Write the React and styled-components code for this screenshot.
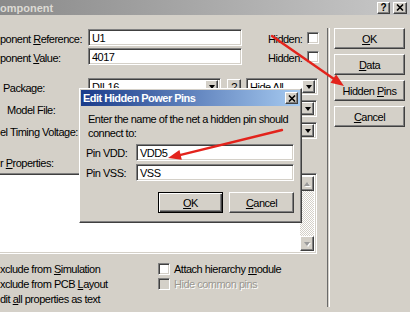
import React from 'react';
import styled, { createGlobalStyle, css } from 'styled-components';

const GlobalStyle = createGlobalStyle`
  html, body {
    margin: 0;
    padding: 0;
  }
  body {
    width: 410px;
    height: 312px;
    overflow: hidden;
    background: #d4d0c8;
    font-family: "Liberation Sans", Arial, sans-serif;
    font-size: 11px;
    letter-spacing: -0.5px;
    color: #000;
  }
`;

const raised = css`
  border: 1px solid;
  border-color: #fff #404040 #404040 #fff;
  box-shadow: inset -1px -1px 0 #808080, inset 1px 1px 0 #d4d0c8;
  background: #d4d0c8;
`;

const sunken = css`
  border: 1px solid;
  border-color: #808080 #fff #fff #808080;
  box-shadow: inset 1px 1px 0 #404040, inset -1px -1px 0 #d4d0c8;
`;

const Window = styled.div`
  position: relative;
  width: 410px;
  height: 312px;
  display: flex;
  flex-direction: column;
  overflow: hidden;
`;

const TitleBar = styled.div`
  height: 15px;
  flex: none;
  display: flex;
  align-items: center;
  gap: 3px;
  padding-right: 3px;
  background: linear-gradient(to right, #8a8a8a, #c8c8c8);
`;

const TitleText = styled.span`
  flex: 1;
  font-weight: bold;
  color: #dcdad4;
  letter-spacing: 0;
`;

const CaptionButton = styled.div`
  box-sizing: border-box;
  width: ${p => p.$w || 13}px;
  height: 12px;
  ${raised};
  display: flex;
  align-items: center;
  justify-content: center;
  font-weight: bold;
  font-size: 10px;
  letter-spacing: 0;
`;

const Body = styled.div`
  flex: 1;
  display: flex;
`;

const Main = styled.div`
  width: 327px;
  flex: none;
  display: flex;
  flex-direction: column;
  padding-top: 14px;
`;

const FormRow = styled.div`
  display: flex;
  align-items: center;
  height: 17px;
  margin-top: ${p => p.$gap || 0}px;
`;

const Label = styled.span`
  box-sizing: border-box;
  width: 88px;
  flex: none;
  padding-left: ${p => p.$indent || 0}px;
  padding-top: 2px;
  white-space: nowrap;
`;

const Key = styled.span`
  text-decoration: underline;
`;

const TextField = styled.div`
  box-sizing: border-box;
  width: ${p => p.$w}px;
  height: 17px;
  flex: none;
  margin-left: ${p => p.$ml || 0}px;
  ${sunken};
  background: #fff;
  display: flex;
  align-items: center;
  padding: 0 2px 0 3px;
  white-space: nowrap;
`;

const FieldText = styled.span`
  flex: 1;
`;

const DropButton = styled.div`
  box-sizing: border-box;
  width: 13px;
  height: 13px;
  flex: none;
  ${raised};
  display: flex;
  align-items: center;
  justify-content: center;
  &::after {
    content: '';
    border-left: 3.5px solid transparent;
    border-right: 3.5px solid transparent;
    border-top: 4px solid #000;
    margin-top: 1px;
  }
`;

const SmallButton = styled.div`
  box-sizing: border-box;
  width: 14px;
  height: 16px;
  margin-left: ${p => p.$ml || 0}px;
  flex: none;
  ${raised};
  display: flex;
  align-items: center;
  justify-content: center;
`;

const HiddenLabel = styled.span`
  margin-left: 26px;
  width: 39px;
  padding-top: 2px;
`;

const CheckBox = styled.div`
  box-sizing: border-box;
  width: 12px;
  height: 12px;
  flex: none;
  ${sunken};
  background: ${p => (p.$disabled ? '#d4d0c8' : '#fff')};
`;

const ListBox = styled.div`
  box-sizing: border-box;
  margin-left: -2px;
  margin-top: 3px;
  width: 319px;
  height: 81px;
  ${sunken};
  background: #fff;
  display: flex;
  justify-content: flex-end;
  padding: 2px 2px 2px 0;
`;

const ScrollBar = styled.div`
  width: 14px;
  display: flex;
  flex-direction: column;
  justify-content: space-between;
  background-color: #eeede9;
  background-image: repeating-conic-gradient(#fff 0 25%, #d4d0c8 0 50%);
  background-size: 2px 2px;
`;

const ScrollArrow = styled.div`
  box-sizing: border-box;
  height: 15px;
  ${raised};
  display: flex;
  align-items: center;
  justify-content: center;
  &::after {
    content: '';
    border-left: 3.5px solid transparent;
    border-right: 3.5px solid transparent;
    ${p => (p.$up ? 'border-bottom' : 'border-top')}: 4px solid #9a9a9a;
    filter: drop-shadow(1px 1px 0 #fff);
  }
`;

const CheckGrid = styled.div`
  display: grid;
  grid-template-columns: 158px 1fr;
  grid-auto-rows: 15px;
  margin-top: 7px;
`;

const CheckItem = styled.div`
  display: flex;
  align-items: center;
  gap: 4px;
  white-space: nowrap;
  color: ${p => (p.$disabled ? '#9a9891' : '#000')};
  text-shadow: ${p => (p.$disabled ? '1px 1px 0 #fff' : 'none')};
`;

const Separator = styled.div`
  width: 1px;
  margin-top: 13px;
  height: 279px;
  border-left: 1px solid #6a6a6a;
  border-right: 1px solid #fff;
`;

const ButtonColumn = styled.div`
  display: flex;
  flex-direction: column;
  gap: 5px;
  padding: 13px 0 0 4px;
`;

const PushButton = styled.div`
  box-sizing: border-box;
  width: ${p => p.$w || 71}px;
  height: 21px;
  display: flex;
  align-items: center;
  justify-content: center;
  ${raised};
  ${p =>
    p.$default &&
    css`
      border: 1px solid #000;
      box-shadow: inset 1px 1px 0 #fff, inset -1px -1px 0 #404040, inset -2px -2px 0 #808080;
    `}
`;

const Dialog = styled.div`
  position: absolute;
  left: 79px;
  top: 88px;
  width: 223px;
  height: 135px;
  box-sizing: border-box;
  ${raised};
  padding: 1px;
  display: flex;
  flex-direction: column;
`;

const DialogTitle = styled.div`
  height: 16px;
  display: flex;
  align-items: center;
  padding: 0 2px;
  background: linear-gradient(to right, #1a3b8a, #a6caf0);
  color: #fff;
  font-weight: bold;
`;

const DialogTitleText = styled.span`
  flex: 1;
`;

const DialogBody = styled.div`
  display: flex;
  flex-direction: column;
  padding: 6px 6px 0 5px;
`;

const Prompt = styled.p`
  margin: 0 0 4px 2px;
  line-height: 14px;
  width: 212px;
`;

const PinRow = styled.div`
  display: flex;
  align-items: center;
  margin-bottom: 3px;
`;

const PinLabel = styled.span`
  width: 50px;
`;

const DialogButtons = styled.div`
  display: flex;
  justify-content: flex-end;
  gap: 6px;
  margin-top: 8px;
`;

const Overlay = styled.svg`
  position: absolute;
  left: 0;
  top: 0;
  pointer-events: none;
`;

const CloseGlyph = () => (
  <svg width="8" height="7" viewBox="0 0 8 7">
    <path d="M1 0.5 L7 6.5 M7 0.5 L1 6.5" stroke="#000" strokeWidth="1.6" />
  </svg>
);

const Combo = ({ w, ml, children }) => (
  <TextField $w={w} $ml={ml}>
    <FieldText>{children}</FieldText>
    <DropButton />
  </TextField>
);

const arrowHead = (x1, y1, x2, y2, len = 13, half = 5) => {
  const dx = x2 - x1;
  const dy = y2 - y1;
  const d = Math.hypot(dx, dy);
  const ux = dx / d;
  const uy = dy / d;
  const bx = x2 - ux * len;
  const by = y2 - uy * len;
  return `${x2},${y2} ${bx - uy * half},${by + ux * half} ${bx + uy * half},${by - ux * half}`;
};

const RedArrow = ({ from, to }) => {
  const [x1, y1] = from;
  const [x2, y2] = to;
  const d = Math.hypot(x2 - x1, y2 - y1);
  const ex = x2 - ((x2 - x1) / d) * 10;
  const ey = y2 - ((y2 - y1) / d) * 10;
  return (
    <g>
      <line x1={x1} y1={y1} x2={ex} y2={ey} stroke="#e3231c" strokeWidth="2.4" strokeLinecap="round" />
      <polygon points={arrowHead(x1, y1, x2, y2)} fill="#e3231c" />
    </g>
  );
};

export default function App() {
  return (
    <>
      <GlobalStyle />
      <Window>
        <TitleBar>
          <TitleText>omponent</TitleText>
          <CaptionButton>?</CaptionButton>
          <CaptionButton $w={14}>
            <CloseGlyph />
          </CaptionButton>
        </TitleBar>
        <Body>
          <Main>
            <FormRow>
              <Label>ponent <Key>R</Key>eference:</Label>
              <TextField $w={154}>U1</TextField>
              <HiddenLabel>Hidden:</HiddenLabel>
              <CheckBox />
            </FormRow>
            <FormRow $gap={2}>
              <Label>ponent <Key>V</Key>alue:</Label>
              <TextField $w={154}>4017</TextField>
              <HiddenLabel>Hidden:</HiddenLabel>
              <CheckBox />
            </FormRow>
            <FormRow $gap={13}>
              <Label $indent={3}>Package:</Label>
              <Combo w={133}>DIL16</Combo>
              <SmallButton $ml={6}>?</SmallButton>
              <Combo w={72} ml={5}>Hide All</Combo>
            </FormRow>
            <FormRow $gap={5}>
              <Label $indent={7}>Model File:</Label>
              <Combo w={229} />
            </FormRow>
            <FormRow $gap={5}>
              <Label>el Timing Voltage:</Label>
              <Combo w={229} />
            </FormRow>
            <FormRow $gap={14}>
              <Label>r <Key>P</Key>roperties:</Label>
            </FormRow>
            <ListBox>
              <ScrollBar>
                <ScrollArrow $up />
                <ScrollArrow />
              </ScrollBar>
            </ListBox>
            <CheckGrid>
              <CheckItem>
                <span>xclude from <Key>S</Key>imulation</span>
              </CheckItem>
              <CheckItem>
                <CheckBox />
                <span>Attach hierarchy <Key>m</Key>odule</span>
              </CheckItem>
              <CheckItem>
                <span>xclude from PCB <Key>L</Key>ayout</span>
              </CheckItem>
              <CheckItem $disabled>
                <CheckBox $disabled />
                <span>Hide common pins</span>
              </CheckItem>
              <CheckItem>
                <span>dit <Key>a</Key>ll properties as text</span>
              </CheckItem>
            </CheckGrid>
          </Main>
          <Separator />
          <ButtonColumn>
            <PushButton><span><Key>O</Key>K</span></PushButton>
            <PushButton><span><Key>D</Key>ata</span></PushButton>
            <PushButton><span>Hidden <Key>P</Key>ins</span></PushButton>
            <PushButton><span><Key>C</Key>ancel</span></PushButton>
          </ButtonColumn>
        </Body>

        <Dialog>
          <DialogTitle>
            <DialogTitleText>Edit Hidden Power Pins</DialogTitleText>
            <CaptionButton>
              <CloseGlyph />
            </CaptionButton>
          </DialogTitle>
          <DialogBody>
            <Prompt>Enter the name of the net a hidden pin should connect to:</Prompt>
            <PinRow>
              <PinLabel>Pin VDD:</PinLabel>
              <TextField $w={158}>VDD5</TextField>
            </PinRow>
            <PinRow>
              <PinLabel>Pin VSS:</PinLabel>
              <TextField $w={158}>VSS</TextField>
            </PinRow>
            <DialogButtons>
              <PushButton $w={65} $default><span><Key>O</Key>K</span></PushButton>
              <PushButton $w={65}><span><Key>C</Key>ancel</span></PushButton>
            </DialogButtons>
          </DialogBody>
        </Dialog>

        <Overlay width="410" height="312" viewBox="0 0 410 312">
          <RedArrow from={[272, 36]} to={[344, 86]} />
          <RedArrow from={[282, 130]} to={[168, 158]} />
        </Overlay>
      </Window>
    </>
  );
}
